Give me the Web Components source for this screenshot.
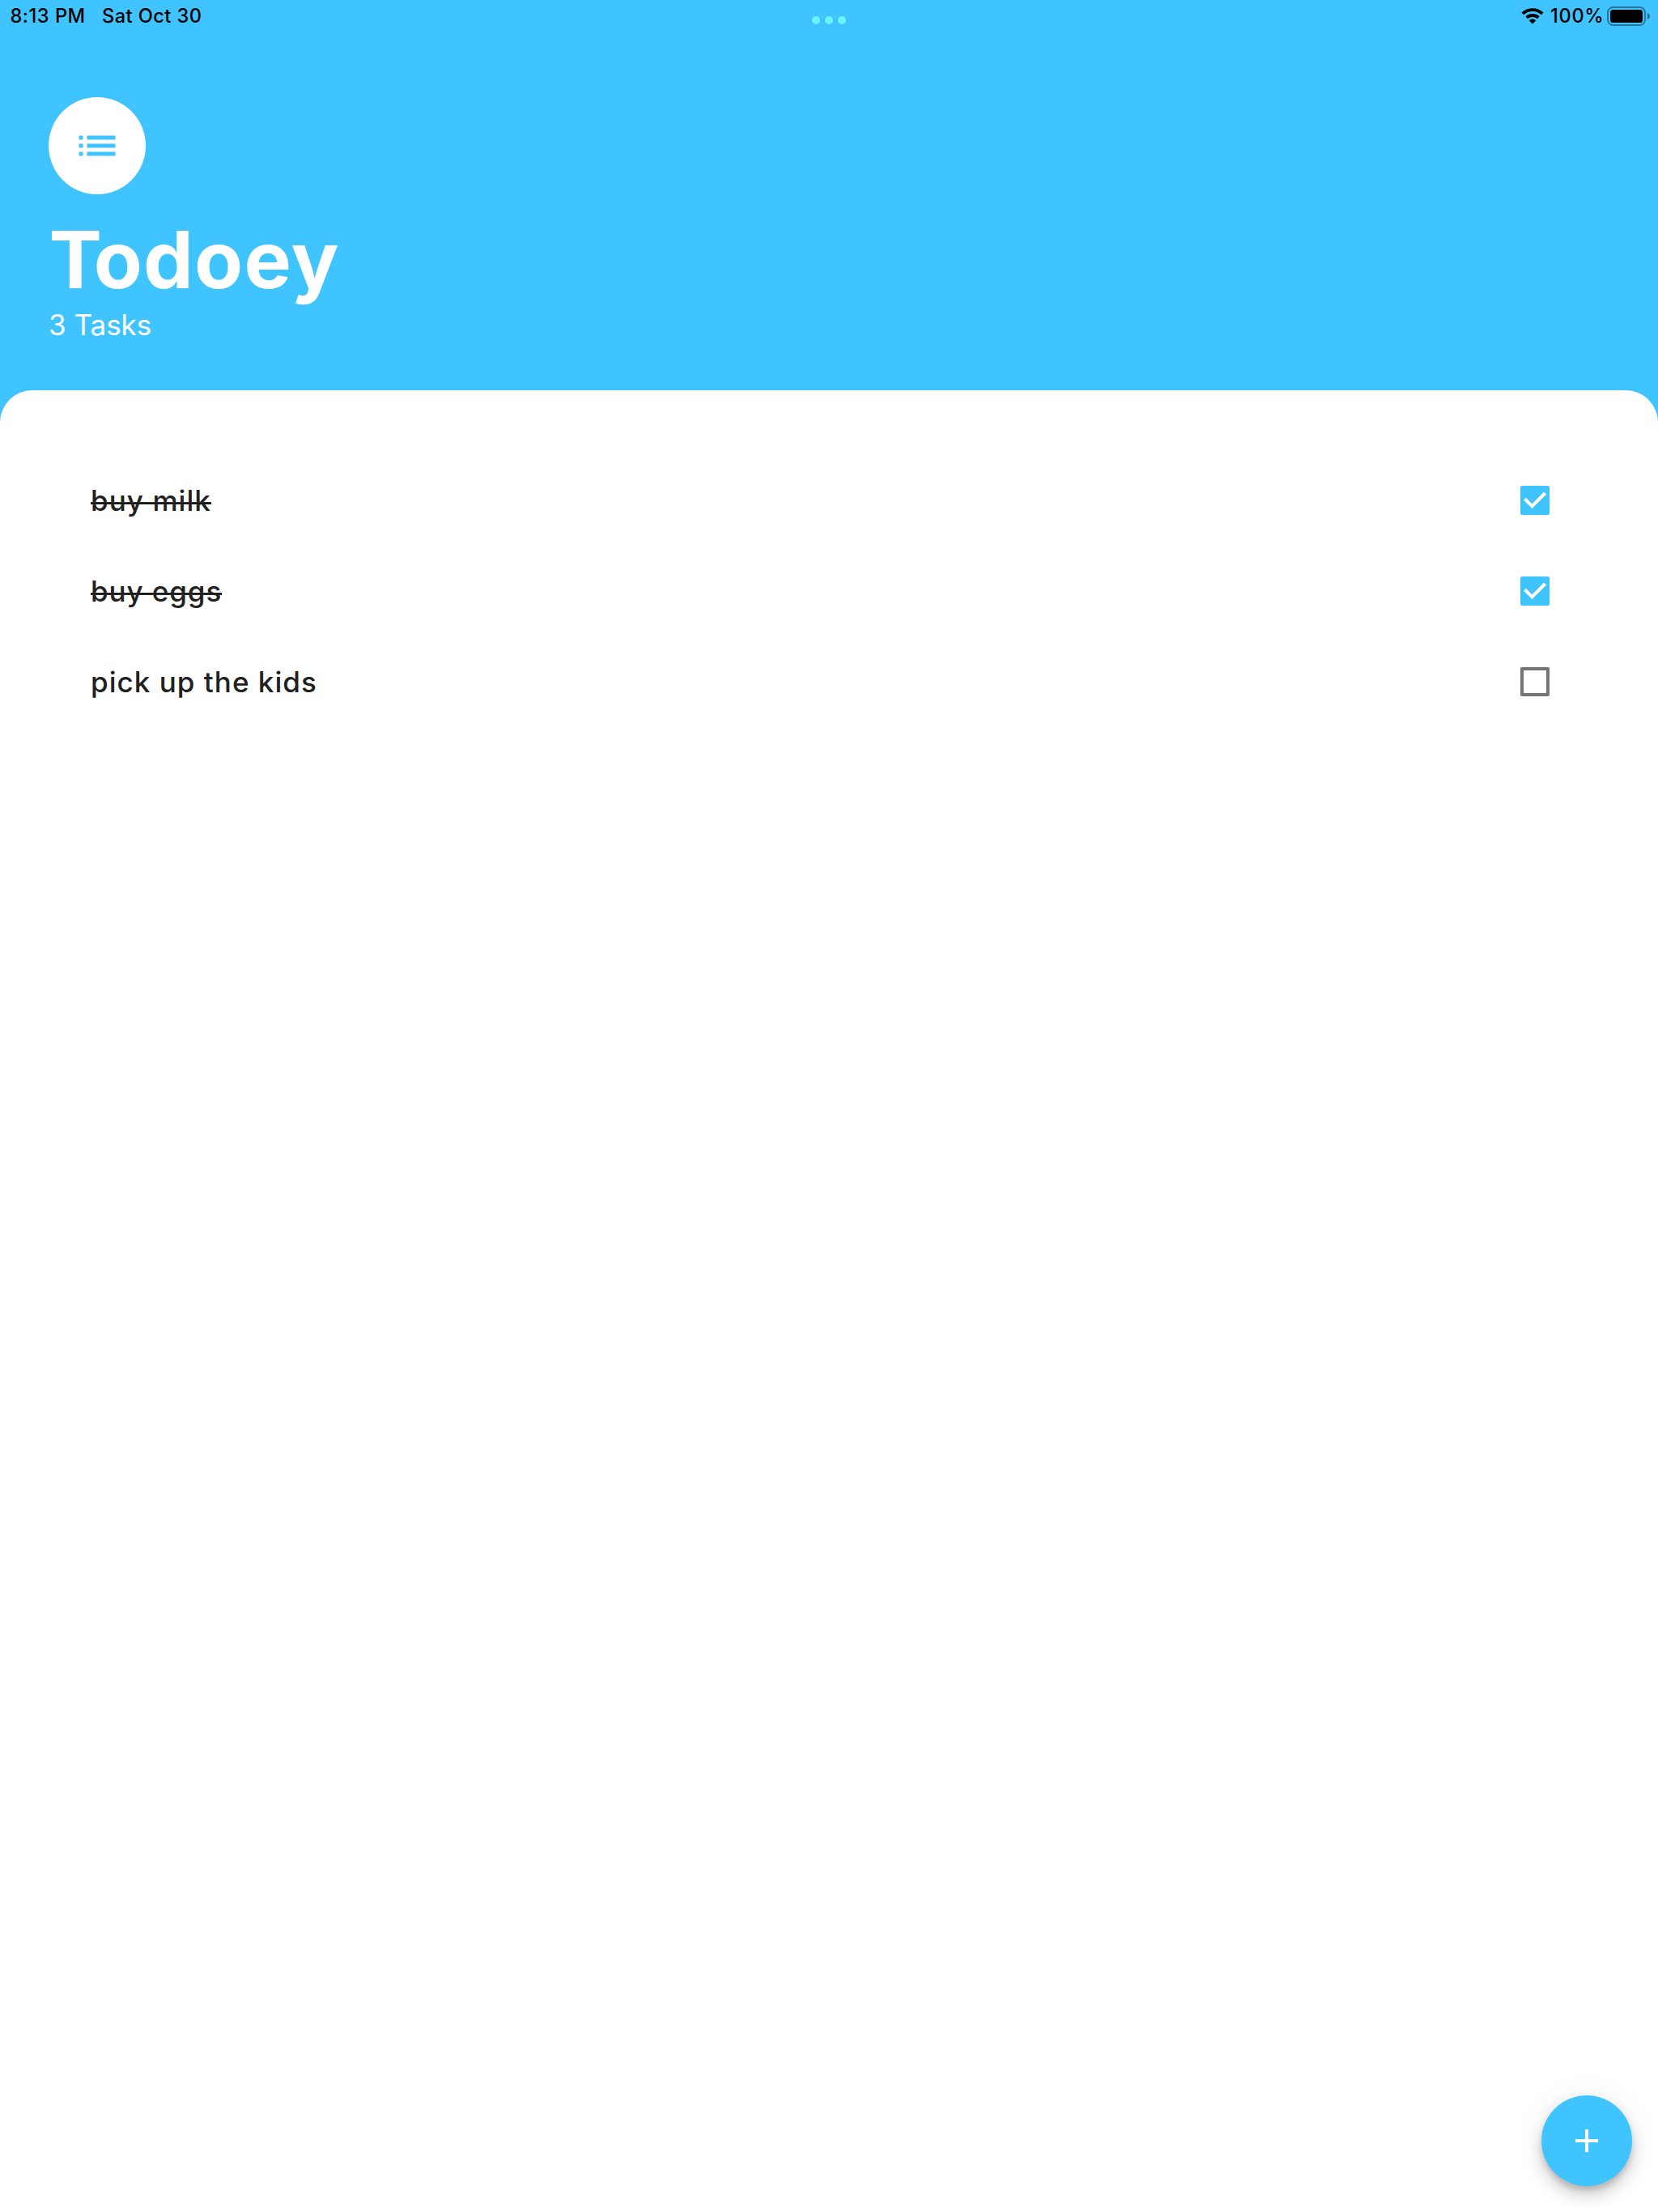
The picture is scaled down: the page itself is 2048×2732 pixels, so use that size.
<!DOCTYPE html>
<html lang="en">
<head>
<meta charset="utf-8">
<title>Todoey</title>
<style>
html, body { margin: 0; padding: 0; }
body { width: 2048px; height: 2732px; overflow: hidden; font-family: Inter, "Liberation Sans", sans-serif; background: #40c4ff; }
</style>
</head>
<body>
<todo-app></todo-app>
<script>
const define = (name, html, setup) => {
  const template = document.createElement('template');
  template.innerHTML = html;
  customElements.define(name, class extends HTMLElement {
    constructor() {
      super();
      this.attachShadow({ mode: 'open' }).append(template.content.cloneNode(true));
    }
    connectedCallback() { if (setup) setup(this); }
  });
};

define('wifi-icon', `
<style>:host { display: block; width: 28px; height: 20px; } svg { display: block; }</style>
<svg width="28" height="20" viewBox="0 0 28 20" fill="none" stroke="#000">
  <path d="M1.8 6.9a17.9 17.9 0 0 1 24.4 0" stroke-width="3.9"/>
  <path d="M6.7 11.8a11 11 0 0 1 14.6 0" stroke-width="3.9"/>
  <path d="M14 19.3L10 15.3a6.3 6.3 0 0 1 8 0z" fill="#000" stroke-width=".6" stroke-linejoin="round"/>
</svg>`);

define('battery-icon', `
<style>:host { display: block; width: 53px; height: 24px; } svg { display: block; }</style>
<svg width="53" height="24" viewBox="0 0 53 24">
  <rect x="1" y="1" width="46" height="22" rx="6.5" fill="none" stroke="#000" stroke-opacity=".4" stroke-width="2"/>
  <rect x="4" y="4" width="40" height="16" rx="3.6"/>
  <path d="M50 8c1.800.7 3 2.200 3 4s-1.200 3.300-3 4z" fill-opacity=".45"/>
</svg>`);

define('status-bar', `
<style>
:host { display: grid; grid-template-columns: 1fr auto 1fr; height: 40px; font-size: 23.6px; font-weight: 500; line-height: 29px; color: #000; }
.left, .right { display: flex; align-items: flex-start; padding-top: 5px; white-space: nowrap; }
.left { padding-left: 12.5px; gap: 20.5px; }
.time { letter-spacing: .5px; }
.date { letter-spacing: .43px; }
.dots { display: flex; gap: 6px; padding-top: 20px; }
.dots i { width: 10px; height: 10px; border-radius: 50%; background: #6ff0ff; }
.right { justify-content: flex-end; padding-right: 10px; }
wifi-icon { margin: 5px 8px 0 0; }
.level { width: 67px; margin-right: 3px; letter-spacing: .7px; }
battery-icon { margin-top: 3px; }
</style>
<div class="left"><span class="time">8:13 PM</span><span class="date">Sat Oct 30</span></div>
<div class="dots"><i></i><i></i><i></i></div>
<div class="right"><wifi-icon></wifi-icon><span class="level">100%</span><battery-icon></battery-icon></div>`);

define('list-avatar', `
<style>:host { display: flex; align-items: center; justify-content: center; width: 120px; height: 120px; border-radius: 50%; background: #fff; } svg { display: block; }</style>
<svg width="60" height="60" viewBox="0 0 24 24" fill="#40c4ff"><path d="M3 13h2v-2H3v2zm0 4h2v-2H3v2zm0-8h2V7H3v2zm4 4h14v-2H7v2zm0 4h14v-2H7v2zM7 7v2h14V7H7z"/></svg>`);

define('app-header', `
<style>
:host { display: flex; flex-direction: column; box-sizing: border-box; height: 442px; padding: 80px 60px 60px; color: #fff; }
h1 { margin: 21px 0 0 .5px; font-size: 98px; line-height: 119px; font-weight: 700; letter-spacing: 1.3px; }
/* pulls the "o" under the arm of the "T" */
h1::first-letter { letter-spacing: -10.3px; }
p { margin: 0; font-size: 35px; line-height: 42px; font-weight: 400; }
</style>
<list-avatar></list-avatar>
<h1><slot name="title"></slot></h1>
<p><slot name="count"></slot></p>`);

define('check-box', `
<style>
:host { display: block; box-sizing: border-box; width: 36px; height: 36px; border-radius: 2px; border: 4px solid #757575; }
:host([checked]) { border: 0; background: #40c4ff; }
svg { display: none; }
:host([checked]) svg { display: block; }
</style>
<svg width="36" height="36" viewBox="0 0 36 36"><path d="M5.400 16.200L14.400 25.200L30.600 9" fill="none" stroke="#fff" stroke-width="4"/></svg>`);

define('task-row', `
<style>
:host { display: flex; align-items: center; justify-content: space-between; height: 112px; }
.label { position: relative; font-size: 35px; line-height: 42px; font-weight: 500; color: #212121; white-space: nowrap; }
:host([done]) .label::after { content: ""; position: absolute; left: 0; right: 0; top: 23px; height: 3px; background: linear-gradient(#333 0 1px, #000 1px 2px, #333 2px); }
</style>
<span class="label"><slot></slot></span>
<check-box></check-box>`, el => {
  el.shadowRoot.querySelector('check-box').toggleAttribute('checked', el.hasAttribute('done'));
  el.shadowRoot.querySelector('.label').style.letterSpacing = el.getAttribute('tracking') + 'px';
});

define('task-panel', `
<style>:host { display: block; flex: 1; box-sizing: border-box; padding: 80px 134px 0 112px; border-radius: 40px 40px 0 0; background: #fff; }</style>
<slot></slot>`);

define('add-button', `
<style>
:host { display: flex; align-items: center; justify-content: center; width: 112px; height: 112px; border-radius: 50%; background: #40c4ff;
  box-shadow: 0 6px 10px -2px rgba(0,0,0,.2), 0 12px 20px 0 rgba(0,0,0,.14), 0 2px 36px 0 rgba(0,0,0,.08); }
svg { display: block; }
</style>
<svg width="48" height="48" viewBox="0 0 24 24" fill="#fff"><path d="M19 13h-6v6h-2v-6H5v-2h6V5h2v6h6v2z"/></svg>`);

define('todo-app', `
<style>
:host { display: flex; flex-direction: column; position: relative; width: 2048px; height: 2732px; background: #40c4ff; }
add-button { position: absolute; right: 32px; bottom: 32px; }
</style>
<status-bar></status-bar>
<app-header><span slot="title">Todoey</span><span slot="count">3 Tasks</span></app-header>
<task-panel>
  <task-row done tracking="1.07">buy milk</task-row>
  <task-row done tracking="0.9">buy eggs</task-row>
  <task-row tracking="1.03">pick up the kids</task-row>
</task-panel>
<add-button></add-button>`);
</script>
</body>
</html>
